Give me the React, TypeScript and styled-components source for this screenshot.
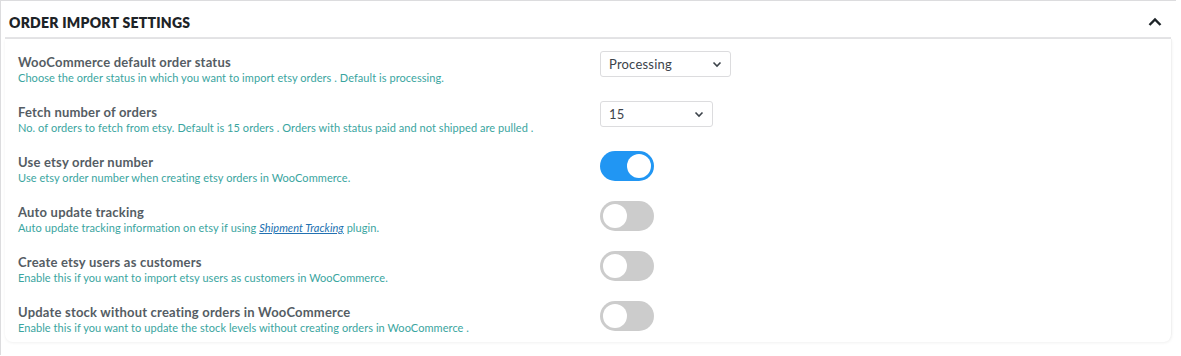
import styled, { createGlobalStyle } from "styled-components";
import type { ReactNode } from "react";

const GlobalStyle = createGlobalStyle`
  body {
    margin: 0;
    background: #fff;
    font-family: Lato, "Noto Sans", sans-serif;
  }
`;

type Setting = {
  title: string;
  desc: ReactNode;
  control: "select" | "toggle";
  value?: string;
  width?: number;
  on?: boolean;
};

const Panel = styled.div`
  border-top: 1px solid #dcdcde;
  border-left: 1px solid #dcdcde;
  background: #fff;
  width: 1176px;
  height: 355px;
  box-sizing: border-box;
`;

const Header = styled.div`
  display: flex;
  align-items: center;
  justify-content: space-between;
  height: 38px;
  box-sizing: border-box;
  padding: 6px 9px 0 4px;
  margin: 0 5px 0 4px;
  border-bottom: 2px solid #e4e4e6;

  h2 {
    margin: 0;
    font-size: 14px;
    font-weight: 800;
    text-transform: uppercase;
    color: #1d2327;
    letter-spacing: 0.25px;
  }
`;

const Card = styled.div`
  margin: 0 4px 0 4px;
  padding: 8px 0 0 13px;
  border-radius: 0 0 8px 8px;
  box-shadow: 0 1px 3px rgba(0, 0, 0, 0.06);
  border-right: 1px solid #f1f1f1;
`;

const Row = styled.div`
  display: grid;
  grid-template-columns: 582px 1fr;
  height: 50px;
  box-sizing: border-box;
  padding-top: 7px;

  &:last-child {
    height: 45px;
  }
`;

const Label = styled.div`
  h4 {
    margin: 0;
    font-size: 13px;
    line-height: 16px;
    font-weight: 700;
    color: #555d64;
    letter-spacing: 0.2px;
  }
  p {
    margin: 0;
    font-size: 11px;
    line-height: 15px;
    color: #3aa5a0;
    letter-spacing: 0.06px;
  }
`;

const DocLink = styled.a`
  color: #2271b1;
  font-style: italic;
  text-decoration: underline;
`;

const Control = styled.div`
  margin-top: -3px;
`;

const Select = styled.div<{ $width: number }>`
  display: flex;
  align-items: center;
  justify-content: space-between;
  width: ${(p) => p.$width}px;
  height: 26px;
  box-sizing: border-box;
  padding: 0 8px 0 8px;
  border: 1px solid #dcdcde;
  border-radius: 3px;
  font-size: 13px;
  color: #3c434a;
  letter-spacing: 0.2px;
`;

const Toggle = styled.div<{ $on: boolean }>`
  position: relative;
  width: 54px;
  height: 30px;
  border-radius: 15px;
  background: ${(p) => (p.$on ? "#2196f3" : "#cccccc")};

  &::after {
    content: "";
    position: absolute;
    top: 3px;
    left: ${(p) => (p.$on ? "27px" : "3px")};
    width: 24px;
    height: 24px;
    border-radius: 50%;
    background: #fff;
  }
`;

const settings: Setting[] = [
  {
    title: "WooCommerce default order status",
    desc: "Choose the order status in which you want to import etsy orders . Default is processing.",
    control: "select",
    value: "Processing",
    width: 131,
  },
  {
    title: "Fetch number of orders",
    desc: "No. of orders to fetch from etsy. Default is 15 orders . Orders with status paid and not shipped are pulled .",
    control: "select",
    value: "15",
    width: 113,
  },
  {
    title: "Use etsy order number",
    desc: "Use etsy order number when creating etsy orders in WooCommerce.",
    control: "toggle",
    on: true,
  },
  {
    title: "Auto update tracking",
    desc: (
      <>
        Auto update tracking information on etsy if using{" "}
        <DocLink href="#">Shipment Tracking</DocLink> plugin.
      </>
    ),
    control: "toggle",
  },
  {
    title: "Create etsy users as customers",
    desc: "Enable this if you want to import etsy users as customers in WooCommerce.",
    control: "toggle",
  },
  {
    title: "Update stock without creating orders in WooCommerce",
    desc: "Enable this if you want to update the stock levels without creating orders in WooCommerce .",
    control: "toggle",
  },
];

const App = () => {
  return (
    <>
      <GlobalStyle />
      <Panel>
        <Header>
          <h2>Order Import Settings</h2>
          <svg width="14" height="10" viewBox="0 0 14 10">
            <polyline
              points="1.5,8 7,2.5 12.5,8"
              fill="none"
              stroke="#1d2327"
              strokeWidth="2.4"
            />
          </svg>
        </Header>
        <Card>
          {settings.map((s) => (
            <Row key={s.title}>
              <Label>
                <h4>{s.title}</h4>
                <p>{s.desc}</p>
              </Label>
              <Control>
                {s.control === "select" ? (
                  <Select $width={s.width || 120}>
                    <span>{s.value}</span>
                    <svg width="10" height="7" viewBox="0 0 10 7">
                      <polyline
                        points="1.5,1.5 5,5 8.5,1.5"
                        fill="none"
                        stroke="#3c434a"
                        strokeWidth="1.6"
                      />
                    </svg>
                  </Select>
                ) : (
                  <Toggle $on={!!s.on} />
                )}
              </Control>
            </Row>
          ))}
        </Card>
      </Panel>
    </>
  );
};

export default App;
